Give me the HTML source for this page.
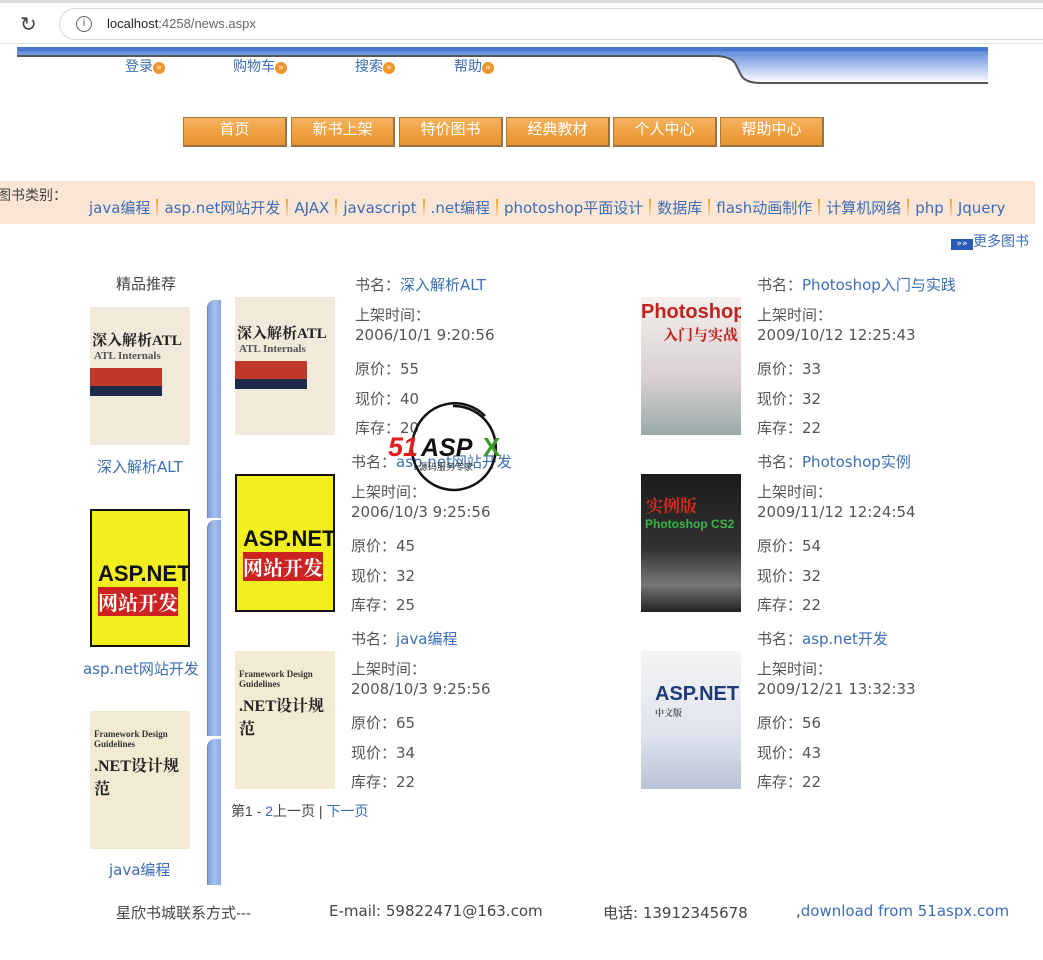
<!DOCTYPE html>
<html><head><meta charset="utf-8"><style>
*{margin:0;padding:0;box-sizing:border-box}
body{width:1043px;height:960px;position:relative;background:#fff;font-family:"DejaVu Sans","Liberation Sans","Noto Sans CJK SC",sans-serif;font-size:15px;color:#555;overflow:hidden}
.a{position:absolute;white-space:nowrap}
.l{color:#3c6db5}
.chrome{position:absolute;left:0;top:0;width:1043px;height:44px;background:#fff;border-top:3px solid #dcdcdc;border-bottom:1px solid #e3e3e3}
.url{position:absolute;left:59px;top:5px;width:1000px;height:32px;border:1px solid #d8d8d8;border-radius:16px;background:#fff}
.nb{position:absolute;top:117px;width:104px;height:30px;background:linear-gradient(#f4b35f,#eea040 55%,#e6952e);border:1px solid #a87a3a;border-right:2px solid #9b7240;border-bottom:2px solid #9b7240;color:#fff;text-align:center;line-height:24px;font-size:15px;font-family:"Liberation Sans","Noto Sans CJK SC",sans-serif}
.cat{position:absolute;left:0;top:181px;width:1035px;height:43px;background:#fbe5d4}
.sep{display:inline-block;width:2px;height:20px;background:linear-gradient(#f0a020,#fbe5d4);margin:0 6px;vertical-align:-6px}
.bk{position:absolute;width:100px;height:138px;overflow:hidden;font-family:"Liberation Serif","Noto Serif CJK SC",serif;font-weight:bold}
.bar{position:absolute;left:207px;width:14px;background:linear-gradient(90deg,#7f9fd8,#a7c0ee 50%,#8aa8de);border-radius:8px 0 0 0;border-left:1px solid #6d87c0}
.arr{display:inline-block;width:12px;height:12px;border-radius:6px;background:#f0962a;color:#fff;font-size:9px;line-height:12px;text-align:center;vertical-align:1px}
</style></head><body>
<div class="chrome"><div class="a" style="left:20px;top:9px;font-size:20px;color:#444">&#x21bb;</div>
<div class="url"><div class="a" style="left:16px;top:7px;width:16px;height:16px;border:1.5px solid #666;border-radius:8px;font-size:10px;text-align:center;line-height:13px;color:#555">i</div>
<div class="a" style="left:47px;top:7px;font-size:13px;color:#222;font-family:'Liberation Sans',sans-serif">localhost<span style="color:#666">:4258/news.aspx</span></div></div></div>

<svg class="a" style="left:17px;top:47px" width="972" height="40">
<defs><linearGradient id="g" x1="0" y1="0" x2="0" y2="1"><stop offset="0" stop-color="#4f7fd8"/><stop offset="1" stop-color="#fff"/></linearGradient></defs>
<path d="M0 0H971V36H744Q728 36 724 28L719 18Q716 10 700 10H0Z" fill="url(#g)"/>
<path d="M0 0H971V4H0Z" fill="#4a78d0"/>
<path d="M0 9H700Q716 10 719 18L724 28Q728 36 744 36H971" stroke="#555" stroke-width="2" fill="none"/>
</svg>
<div class="a l" style="left:125px;top:56px;font-size:14px">登录<span class="arr">»</span></div>
<div class="a l" style="left:233px;top:56px;font-size:14px">购物车<span class="arr">»</span></div>
<div class="a l" style="left:355px;top:56px;font-size:14px">搜索<span class="arr">»</span></div>
<div class="a l" style="left:454px;top:56px;font-size:14px">帮助<span class="arr">»</span></div>

<div class="nb" style="left:183px">首页</div>
<div class="nb" style="left:291px">新书上架</div>
<div class="nb" style="left:399px">特价图书</div>
<div class="nb" style="left:506px">经典教材</div>
<div class="nb" style="left:613px">个人中心</div>
<div class="nb" style="left:720px">帮助中心</div>

<div class="cat"></div>
<div class="a" style="left:-3px;top:185px;font-size:14px;color:#444">图书类别：</div>
<div class="a l" style="left:89px;top:197px;font-size:15px">java编程<span class="sep"></span>asp.net网站开发<span class="sep"></span>AJAX<span class="sep"></span>javascript<span class="sep"></span>.net编程<span class="sep"></span>photoshop平面设计<span class="sep"></span>数据库<span class="sep"></span>flash动画制作<span class="sep"></span>计算机网络<span class="sep"></span>php<span class="sep"></span>Jquery</div>
<div class="a l" style="left:951px;top:231px;font-size:14px"><span style="display:inline-block;width:22px;height:11px;background:#2a5ab8;color:#fff;font-size:9px;line-height:11px;text-align:center;vertical-align:0">»»</span>更多图书</div>

<div class="a" style="left:116px;top:273px;color:#444">精品推荐</div>
<div class="bk" style="left:90px;top:307px;background:#f1eadb"><div style="margin:22px 0 0 2px;font-size:15px;color:#222">深入解析ATL</div><div style="font-size:11px;margin-left:4px">ATL Internals</div><div style="height:18px;background:#c0392b;margin-top:6px;width:72%"></div><div style="height:10px;background:#1d2a4a;width:72%"></div></div>
<div class="a l" style="left:97px;top:456px">深入解析ALT</div>
<div class="bk" style="left:90px;top:509px;background:#f3ee20;border:2px solid #111"><div style="margin:50px 0 0 6px;font-size:22px;color:#111;font-family:'Liberation Sans'">ASP.NET</div><div style="font-size:20px;color:#fff;margin-left:6px;background:#c22;width:80px">网站开发</div></div>
<div class="a l" style="left:83px;top:658px">asp.net网站开发</div>
<div class="bk" style="left:90px;top:711px;background:#f2ead2"><div style="margin:18px 0 0 4px;font-size:9px;color:#333">Framework Design Guidelines</div><div style="font-size:16px;color:#222;margin:4px">.NET设计规范</div></div>
<div class="a l" style="left:109px;top:859px">java编程</div>

<div class="bar" style="top:300px;height:218px"></div>
<div class="bar" style="top:520px;height:216px"></div>
<div class="bar" style="top:739px;height:146px"></div>

<div class="bk" style="left:235px;top:297px;background:#f1eadb"><div style="margin:25px 0 0 2px;font-size:15px;color:#222">深入解析ATL</div><div style="font-size:11px;margin-left:4px">ATL Internals</div><div style="height:18px;background:#c0392b;margin-top:6px;width:72%"></div><div style="height:10px;background:#1d2a4a;width:72%"></div></div>
<div class="bk" style="left:235px;top:474px;background:#f3ee20;border:2px solid #111"><div style="margin:50px 0 0 6px;font-size:22px;color:#111;font-family:'Liberation Sans'">ASP.NET</div><div style="font-size:20px;color:#fff;margin-left:6px;background:#c22;width:80px">网站开发</div></div>
<div class="bk" style="left:235px;top:651px;background:#f2ead2"><div style="margin:18px 0 0 4px;font-size:9px;color:#333">Framework Design Guidelines</div><div style="font-size:16px;color:#222;margin:4px">.NET设计规范</div></div>
<div class="bk" style="left:641px;top:297px;background:linear-gradient(#f4f0ee,#d8cfd0 60%,#9aa 100%)"><div style="margin:4px 0 0 0;font-size:20px;color:#c0231e;font-family:'Liberation Sans'">PhotoshopCS2</div><div style="font-size:15px;color:#c0231e;margin-left:22px">入门与实战</div></div>
<div class="bk" style="left:641px;top:474px;background:linear-gradient(#1b1b1b,#333 55%,#777 80%,#222)"><div style="margin:18px 0 0 5px;font-size:17px;color:#d92a20">实例版</div><div style="font-size:12px;color:#3eb54a;margin-left:4px;font-family:'Liberation Sans'">Photoshop CS2</div></div>
<div class="bk" style="left:641px;top:651px;background:linear-gradient(#f4f4f4,#dfe4ee 60%,#b9c3d4)"><div style="margin:32px 0 0 14px;font-size:20px;color:#1e3a78;font-family:'Liberation Sans'">ASP.NET</div><div style="font-size:9px;margin-left:14px">中文版</div></div>

<div class="a" style="left:355px;top:274px">书名：<span class="l">深入解析ALT</span></div>
<div class="a" style="left:355px;top:304px">上架时间：</div><div class="a" style="left:355px;top:326px">2006/10/1 9:20:56</div>
<div class="a" style="left:355px;top:358px">原价：55</div><div class="a" style="left:355px;top:388px">现价：40</div><div class="a" style="left:355px;top:417px">库存：20</div>

<div class="a" style="left:351px;top:451px">书名：<span class="l">asp.net网站开发</span></div>
<div class="a" style="left:351px;top:481px">上架时间：</div><div class="a" style="left:351px;top:503px">2006/10/3 9:25:56</div>
<div class="a" style="left:351px;top:535px">原价：45</div><div class="a" style="left:351px;top:565px">现价：32</div><div class="a" style="left:351px;top:594px">库存：25</div>

<div class="a" style="left:351px;top:628px">书名：<span class="l">java编程</span></div>
<div class="a" style="left:351px;top:658px">上架时间：</div><div class="a" style="left:351px;top:680px">2008/10/3 9:25:56</div>
<div class="a" style="left:351px;top:712px">原价：65</div><div class="a" style="left:351px;top:742px">现价：34</div><div class="a" style="left:351px;top:771px">库存：22</div>

<div class="a" style="left:757px;top:274px">书名：<span class="l">Photoshop入门与实践</span></div>
<div class="a" style="left:757px;top:304px">上架时间：</div><div class="a" style="left:757px;top:326px">2009/10/12 12:25:43</div>
<div class="a" style="left:757px;top:358px">原价：33</div><div class="a" style="left:757px;top:388px">现价：32</div><div class="a" style="left:757px;top:417px">库存：22</div>

<div class="a" style="left:757px;top:451px">书名：<span class="l">Photoshop实例</span></div>
<div class="a" style="left:757px;top:481px">上架时间：</div><div class="a" style="left:757px;top:503px">2009/11/12 12:24:54</div>
<div class="a" style="left:757px;top:535px">原价：54</div><div class="a" style="left:757px;top:565px">现价：32</div><div class="a" style="left:757px;top:594px">库存：22</div>

<div class="a" style="left:757px;top:628px">书名：<span class="l">asp.net开发</span></div>
<div class="a" style="left:757px;top:658px">上架时间：</div><div class="a" style="left:757px;top:680px">2009/12/21 13:32:33</div>
<div class="a" style="left:757px;top:712px">原价：56</div><div class="a" style="left:757px;top:742px">现价：43</div><div class="a" style="left:757px;top:771px">库存：22</div>

<svg class="a" style="left:385px;top:402px" width="130" height="92">
<path d="M68 4A42 42 0 1 1 30 30" stroke="#111" stroke-width="2.5" fill="none"/>
<path d="M30 30 A42 42 0 0 1 100 14" stroke="#111" stroke-width="2.5" fill="none"/>
<text x="3" y="54" font-family="Liberation Sans" font-weight="bold" font-style="italic" font-size="27" fill="#e01e1e">51</text>
<text x="36" y="54" font-family="Liberation Sans" font-weight="bold" font-style="italic" font-size="25" fill="#111">ASP</text>
<text x="98" y="54" font-family="Liberation Sans" font-weight="bold" font-size="26" fill="#3a9a2a">X</text>
<text x="34" y="68" font-family="Noto Sans CJK SC" font-size="9" fill="#333">源码服务专家</text>
</svg>

<div class="a" style="left:231px;top:801px;font-size:14px;color:#444;font-family:'Liberation Sans','Noto Sans CJK SC',sans-serif">第1 - <span class="l">2</span>上一页 | <span class="l">下一页</span></div>

<div class="a" style="left:116px;top:902px;color:#444;font-size:15px;font-family:'Liberation Sans','Noto Sans CJK SC',sans-serif">星欣书城联系方式---</div>
<div class="a" style="left:329px;top:902px;color:#444">E-mail: 59822471@163.com</div>
<div class="a" style="left:603px;top:902px;color:#444">电话: 13912345678</div>
<div class="a" style="left:796px;top:902px" ><span style="color:#444">,</span><span class="l">download from 51aspx.com</span></div>
</body></html>
